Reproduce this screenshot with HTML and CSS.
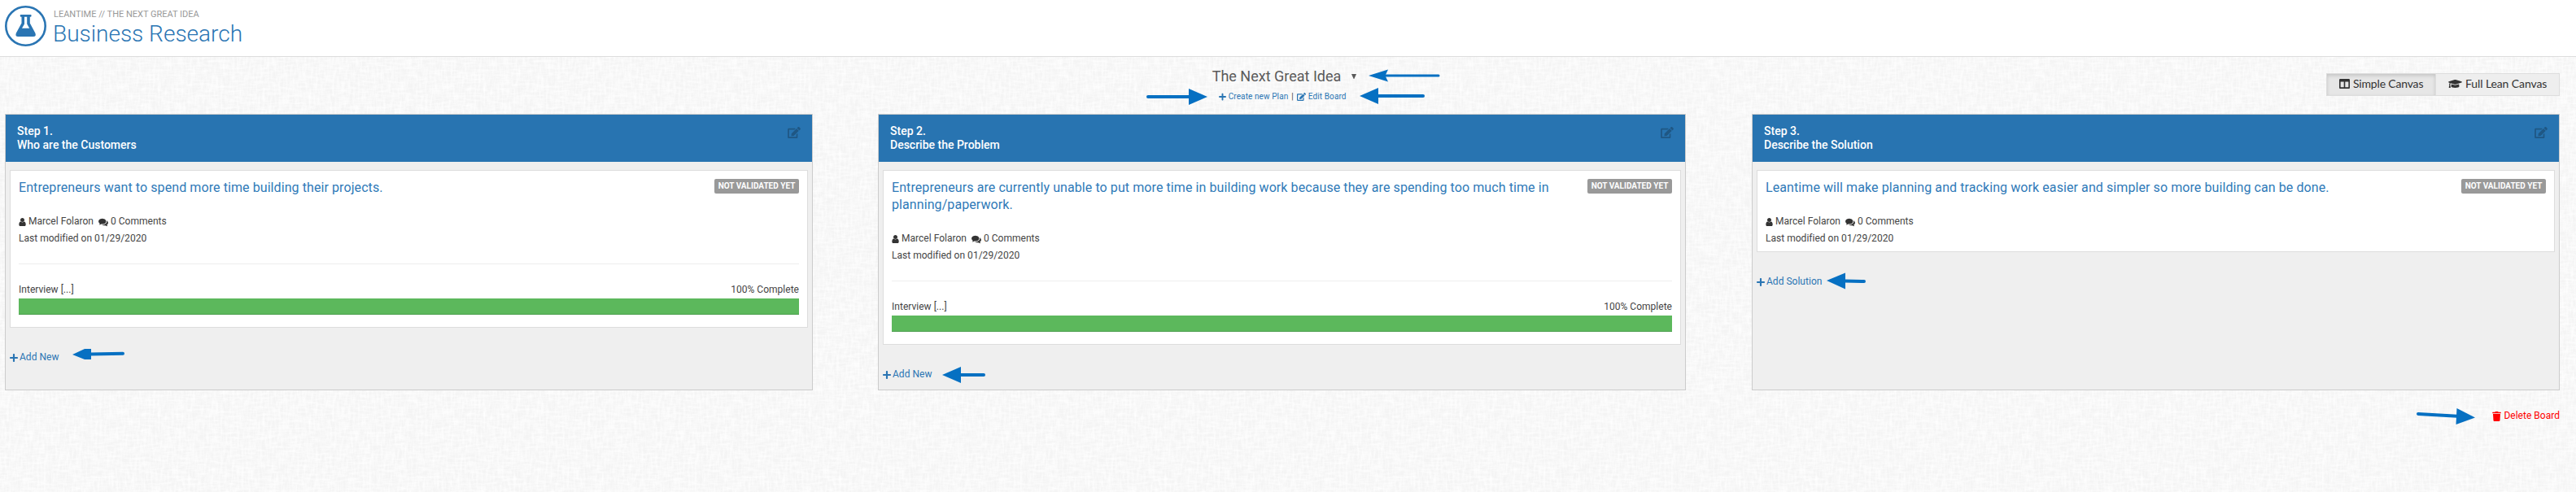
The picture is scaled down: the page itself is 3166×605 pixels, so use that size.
FILE: index.html
```
<!DOCTYPE html>
<html lang="en">
<head>
<meta charset="utf-8">
<title>Business Research</title>
<link rel="stylesheet" href="styles.css">
</head>
<body>
<svg class="sprite" aria-hidden="true">
  <symbol id="plus" viewBox="0 0 448 512"><path d="M416 208H272V64c0-17.67-14.33-32-32-32h-32c-17.67 0-32 14.33-32 32v144H32c-17.67 0-32 14.33-32 32v32c0 17.67 14.33 32 32 32h144v144c0 17.67 14.33 32 32 32h32c17.67 0 32-14.33 32-32V304h144c17.67 0 32-14.33 32-32v-32c0-17.67-14.33-32-32-32z"/></symbol>
  <symbol id="edit" viewBox="0 0 576 512"><path d="M402.6 83.2l90.2 90.2c3.8 3.8 3.8 10 0 13.8L274.4 405.6l-92.8 10.3c-12.4 1.4-22.9-9.1-21.5-21.5l10.3-92.8L388.8 83.2c3.8-3.8 10-3.8 13.8 0zm162-22.9l-48.8-48.8c-15.2-15.2-39.9-15.2-55.2 0l-35.4 35.4c-3.8 3.8-3.8 10 0 13.8l90.2 90.2c3.8 3.8 10 3.8 13.8 0l35.4-35.4c15.2-15.3 15.2-40 0-55.2zM384 346.2V448H64V128h229.8c3.2 0 6.2-1.3 8.5-3.5l40-40c7.6-7.6 2.2-20.5-8.5-20.5H48C21.5 64 0 85.5 0 112v352c0 26.5 21.5 48 48 48h352c26.5 0 48-21.5 48-48V306.2c0-10.7-12.9-16-20.5-8.5l-40 40c-2.2 2.3-3.5 5.3-3.5 8.5z"/></symbol>
  <symbol id="user" viewBox="256 128 1280 1536"><path d="M1536 1399q0 109-62.5 187t-150.5 78h-854q-88 0-150.5-78t-62.5-187q0-85 8.5-160.5t31.5-152 58.5-131 94-89 134.5-34.5q131 128 313 128t313-128q76 0 134.5 34.5t94 89 58.5 131 31.5 152 8.5 160.5zm-256-887q0 159-112.5 271.5t-271.5 112.5-271.5-112.5-112.5-271.5 112.5-271.5 271.5-112.5 271.5 112.5 112.5 271.5z"/></symbol>
  <symbol id="comments" viewBox="0 128 1792 1664"><path d="M1408 768q0 139-94 257t-256.500 186.500-353.500 68.500q-86 0-176-16-124 88-278 128-36 9-86 16h-3q-11 0-20.500-8t-11.500-21q-1-3-1-6.500t.500-6.500 2-6l2.500-5 3.500-5.500 4-5 4.500-5 4-4.500q5-6 23-25t26-29.500 22.500-29 25-38.500 20.500-44q-124-72-195-177t-71-224q0-139 94-257t256.500-186.500 353.500-68.500 353.500 68.500 256.500 186.500 94 257zm384 256q0 120-71 224.500t-195 176.500q10 24 20.500 44t25 38.500 22.500 29 26 29.500 23 25q1 1 4 4.500t4.500 5 4 5 3.500 5.500l2.500 5 2 6 .500 6.500-1 6.500q-3 14-13 22t-22 7q-50-7-86-16-154-40-278-128-90 16-176 16-271 0-472-132 58 4 88 4 161 0 309-45t264-129q125-92 192-212t67-254q0-77-23-152 129 71 204 178t75 230z"/></symbol>
  <symbol id="trash" viewBox="0 0 448 512"><path d="M432 32H312l-9.4-18.7A24 24 0 0 0 281.1 0H166.8a23.72 23.72 0 0 0-21.4 13.3L136 32H16A16 16 0 0 0 0 48v32a16 16 0 0 0 16 16h416a16 16 0 0 0 16-16V48a16 16 0 0 0-16-16zM53.2 467a48 48 0 0 0 47.900 45h245.800a48 48 0 0 0 47.900-45L416 128H32z"/></symbol>
  <symbol id="columns" viewBox="0 32 512 448" preserveAspectRatio="none"><path d="M464 32H48C21.490 32 0 53.490 0 80v352c0 26.510 21.490 48 48 48h416c26.510 0 48-21.490 48-48V80c0-26.510-21.490-48-48-48zM224 416H64V160h160v256zm224 0H288V160h160v256z"/></symbol>
  <symbol id="cap" viewBox="0 64 640 384"><path d="M622.340 153.200L343.400 67.500c-15.200-4.670-31.600-4.670-46.790 0L17.660 153.200c-23.540 7.230-23.540 38.360 0 45.590l48.630 14.940c-10.670 13.190-17.230 29.280-17.880 46.900C38.780 266.150 32 276.110 32 288c0 10.780 5.680 19.850 13.860 25.650L20.330 428.530C18.110 438.520 25.710 448 35.940 448h56.110c10.240 0 17.840-9.480 15.620-19.470L82.140 313.650C90.320 307.850 96 298.780 96 288c0-11.570-6.470-21.250-15.660-26.870.76-15.020 8.440-28.300 20.690-36.720L296.600 284.500c9.060 2.780 26.440 6.250 46.790 0l278.950-85.700c23.550-7.240 23.550-38.360 0-45.600zM352.790 315.090c-28.530 8.760-52.840 3.920-65.590 0l-145.020-44.550L128 384c0 35.350 85.960 64 192 64s192-28.650 192-64l-14.180-113.470-145.030 44.560z"/></symbol>
</svg>

<header class="page-header">
  <svg class="logo" viewBox="0 0 51 50">
    <ellipse cx="25.500" cy="25" rx="24.200" ry="23.700"/>
    <path class="flask" fill-rule="evenodd" d="M19.500 11h12.300q.8 0 .8 1.300t-.8 1.500h-1v7.600l6.600 12.300q1.500 4.300-2.500 4.300H16.300q-4 0-2.500-4.300l6.700-12.300v-7.600h-1q-.8-.2-.8-1.500t.8-1.300zM24 13.800v8.700l-3 5.300h9.200l-3-5.300v-8.700z"/>
  </svg>
  <div class="heading">
    <div class="crumb">LEANTIME // THE NEXT GREAT IDEA</div>
    <h1 class="title">Business Research</h1>
  </div>
</header>

<main class="content">
  <div class="toolbar">
    <div class="board-picker">
      <div class="board-name"><span>The Next Great Idea</span><svg class="caret" viewBox="0 0 6 6"><path d="M0 0h6L3.300 6h-.6z"/></svg></div>
      <div class="board-links">
        <a class="link"><svg class="i-plus-s"><use href="#plus"/></svg>Create new Plan</a><span class="bar">|</span><a class="link"><svg class="i-edit-s"><use href="#edit"/></svg>Edit Board</a>
      </div>
    </div>
    <div class="views">
      <button class="view active"><svg class="i-columns"><use href="#columns"/></svg>Simple Canvas</button>
      <button class="view full"><svg class="i-cap"><use href="#cap"/></svg>Full Lean Canvas</button>
    </div>
  </div>

  <div class="board">
    <section class="panel">
      <div class="panel-head"><h2 class="step">Step 1.<br>Who are the Customers</h2><svg class="i-edit"><use href="#edit"/></svg></div>
      <div class="panel-body">
        <article class="card">
          <div class="card-top"><h3 class="card-title">Entrepreneurs want to spend more time building their projects.</h3><span class="badge">NOT VALIDATED YET</span></div>
          <div class="meta"><svg class="i-user"><use href="#user"/></svg><span class="name">Marcel Folaron</span><svg class="i-comments"><use href="#comments"/></svg><span>0 Comments</span></div>
          <div class="modified">Last modified on 01/29/2020</div>
          <hr class="rule">
          <div class="progress-label"><span>Interview [...]</span><span>100% Complete</span></div>
          <div class="progress"></div>
        </article>
        <a class="add"><svg class="i-plus"><use href="#plus"/></svg>Add New</a>
      </div>
    </section>

    <section class="panel">
      <div class="panel-head"><h2 class="step">Step 2.<br>Describe the Problem</h2><svg class="i-edit"><use href="#edit"/></svg></div>
      <div class="panel-body">
        <article class="card">
          <div class="card-top"><h3 class="card-title">Entrepreneurs are currently unable to put more time in building work because they are spending too much time in<br>planning/paperwork.</h3><span class="badge">NOT VALIDATED YET</span></div>
          <div class="meta"><svg class="i-user"><use href="#user"/></svg><span class="name">Marcel Folaron</span><svg class="i-comments"><use href="#comments"/></svg><span>0 Comments</span></div>
          <div class="modified">Last modified on 01/29/2020</div>
          <hr class="rule">
          <div class="progress-label"><span>Interview [...]</span><span>100% Complete</span></div>
          <div class="progress"></div>
        </article>
        <a class="add"><svg class="i-plus"><use href="#plus"/></svg>Add New</a>
      </div>
    </section>

    <section class="panel">
      <div class="panel-head"><h2 class="step">Step 3.<br>Describe the Solution</h2><svg class="i-edit"><use href="#edit"/></svg></div>
      <div class="panel-body">
        <article class="card">
          <div class="card-top"><h3 class="card-title">Leantime will make planning and tracking work easier and simpler so more building can be done.</h3><span class="badge">NOT VALIDATED YET</span></div>
          <div class="meta"><svg class="i-user"><use href="#user"/></svg><span class="name">Marcel Folaron</span><svg class="i-comments"><use href="#comments"/></svg><span>0 Comments</span></div>
          <div class="modified">Last modified on 01/29/2020</div>
        </article>
        <a class="add"><svg class="i-plus"><use href="#plus"/></svg>Add Solution</a>
      </div>
    </section>
  </div>

  <div class="footer"><a class="delete"><svg class="i-trash"><use href="#trash"/></svg>Delete Board</a></div>
</main>

<!-- Callout arrows laid over the board -->
<svg class="arrows" viewBox="0 0 3166 605">
  <g class="shaft">
    <path class="thin" d="M1702 93H1768"/>
    <path d="M1411 119H1462"/>
    <path d="M1693 118H1749"/>
    <path d="M111 435.500L151 434.800"/>
    <path d="M1180 461H1209"/>
    <path d="M2267 345.500L2291 346"/>
    <path d="M2972 509L3020 511.700"/>
  </g>
  <g class="tip">
    <path d="M1682 93L1706 85.500L1702.500 93L1706 100.500z"/>
    <path d="M1484 119L1461 109V129z"/>
    <path d="M1671 118L1694 108V128z"/>
    <path d="M89 436L104 429H112V442H104z"/>
    <path d="M1158 461L1181 451V471z"/>
    <path d="M2245 345L2268 335.500V355.500z"/>
    <path d="M3042 513.500L3019.500 502L3018.500 522z"/>
  </g>
</svg>
</body>
</html>
```
FILE: styles.css
```
* { box-sizing: border-box; }
body {
  margin: 0;
  height: 605px;
  overflow: hidden;
  position: relative;
  font: 400 12px/21px Roboto, "Liberation Sans", sans-serif;
  letter-spacing: .02px;
  color: #444;
  background-color: #f4f4f4;
  background-image: url("data:image/svg+xml,%3Csvg xmlns='http://www.w3.org/2000/svg' width='400' height='400'%3E%3Cfilter id='a' x='0' y='0' width='100%25' height='100%25'%3E%3CfeTurbulence type='fractalNoise' baseFrequency='.07 .35' numOctaves='3' seed='4' stitchTiles='stitch'/%3E%3CfeColorMatrix values='0 0 0 0 1 0 0 0 0 1 0 0 0 0 1 1.5 0 0 0 -.55'/%3E%3C/filter%3E%3Cfilter id='b' x='0' y='0' width='100%25' height='100%25'%3E%3CfeTurbulence type='fractalNoise' baseFrequency='.35 .07' numOctaves='3' seed='9' stitchTiles='stitch'/%3E%3CfeColorMatrix values='0 0 0 0 1 0 0 0 0 1 0 0 0 0 1 1.5 0 0 0 -.55'/%3E%3C/filter%3E%3Crect width='400' height='400' filter='url(%23a)'/%3E%3Crect width='400' height='400' filter='url(%23b)'/%3E%3C/svg%3E");
}
svg { display: block; flex: none; fill: currentColor; }
h1, h2, h3 { margin: 0; font-weight: 400; }
.sprite { position: absolute; width: 0; height: 0; }

.page-header {
  display: flex;
  height: 70px;
  padding: 7px 6px 0;
  background: #fff;
  border-bottom: 1px solid #ddd;
}
.logo { width: 51px; height: 50px; color: #2a75b3; }
.logo ellipse { fill: none; stroke: currentColor; stroke-width: 2.600; }
.heading { padding: 3px 0 0 8px; letter-spacing: 0; }
.crumb { padding-left: 1px; font-size: 11px; line-height: 16px; color: #999; }
.title { font-size: 28px; line-height: 31px; font-weight: 300; color: #2a75b3; }

.content { padding: 0 20px 0 6px; }
.toolbar { display: grid; grid-template-columns: 1fr auto 1fr; height: 70px; }
.board-picker { grid-column: 2; padding: 11px 0 0 5px; }
.board-name { display: flex; align-items: center; gap: 13px; font-size: 18px; line-height: 26px; letter-spacing: 0; color: #5a5a5a; }
.caret { width: 6px; height: 6px; }
.board-links { display: flex; align-items: center; padding: 4px 0 0 8px; font-size: 10px; line-height: 16px; letter-spacing: .1px; }
.link { display: flex; align-items: center; gap: 3px; color: #2a75b3; }
.bar { margin: 0 4px; }
.i-plus-s { width: 9px; height: 10px; }
.i-edit-s { width: 11px; height: 10px; }
.views { display: flex; justify-self: end; height: 28px; margin-top: 20px; }
.view {
  display: flex;
  align-items: center;
  gap: 4px;
  width: 135px;
  padding: 0 0 2px 15px;
  border: 1px solid #ddd;
  background: #eee;
  color: #333;
  font: 14px/20px Lato, sans-serif;
  letter-spacing: -.18px;
  white-space: nowrap;
}
.view.active { background: #e6e6e6; box-shadow: inset 0 2px 4px rgba(0, 0, 0, .15); }
.view.full { width: 153px; margin-left: -1px; letter-spacing: -.1px; }
.i-columns { width: 13px; height: 12px; }
.i-cap { width: 17px; height: 10px; }

.board { display: grid; grid-template-columns: 993px 994px 993px; column-gap: 80px; height: 340px; }
.panel { width: 993px; border: 1px solid #ccc; background: #efefef; }
.panel-head { display: flex; justify-content: space-between; height: 58px; padding: 12px 14px; background: #2874b1; }
.step { font-size: 14px; line-height: 17px; font-weight: 500; letter-spacing: 0; color: #fff; }
.i-edit { width: 16px; height: 14px; margin-top: 3px; color: #1f5784; }
.panel-body { padding: 10px 5px 0; }
.card { padding: 10px 10px 5px; background: #fff; border: 1px solid #ddd; }
.card-top { display: flex; justify-content: space-between; align-items: flex-start; margin-bottom: 21px; }
.card-title { font-size: 16px; line-height: 21px; letter-spacing: .085px; color: #2f7ab8; }
.badge {
  height: 18px;
  width: 104px;
  border-radius: 2px;
  background: #999;
  color: #fff;
  font-size: 10px;
  font-weight: 700;
  letter-spacing: 0;
  line-height: 17px;
  text-align: center;
  white-space: nowrap;
}
.meta { display: flex; align-items: center; height: 21px; }
.meta svg { color: #333; }
.i-user { width: 9px; height: 10px; margin-right: 3px; }
.i-comments { width: 12px; height: 11px; margin: 1px 3px 0 6px; }
.modified { height: 21px; }
.rule { height: 1px; margin: 20px 0; border: 0; background: #eee; }
.progress-label { display: flex; justify-content: space-between; padding-top: 1px; }
.progress { height: 20px; margin: 0 0 10px; background: #5cb85c; border-bottom: 1px solid #4b9f4e; }
.add { display: flex; align-items: center; gap: 2px; margin-top: 26px; color: #2a75b3; }
.i-plus { width: 10px; height: 12px; }

.footer { display: flex; justify-content: flex-end; padding-top: 21px; }
.delete { display: flex; align-items: center; gap: 3px; color: #f00; }
.i-trash { width: 11px; height: 12px; }

.arrows { position: absolute; left: 0; top: 0; width: 3166px; height: 605px; pointer-events: none; color: #0670c2; }
.shaft { fill: none; stroke: currentColor; stroke-width: 4; stroke-linecap: round; }
.thin { stroke-width: 3; }
```
